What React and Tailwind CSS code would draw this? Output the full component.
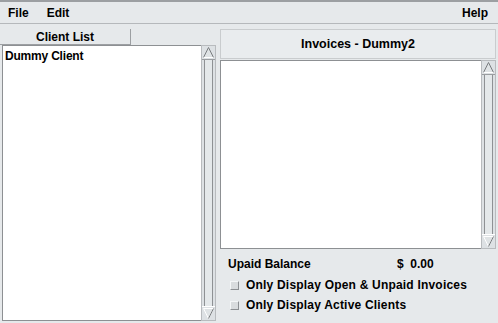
import React from "react";

function UpArrow() {
  return (
    <svg width="13" height="13" viewBox="0 0 13 13" className="block">
      <path d="M6.5 1.5 L11.5 11.5 L1.5 11.5 Z" fill="#dfe3e5" stroke="#7a7d80" strokeWidth="1" />
      <path d="M1.5 11.5 L11.5 11.5" stroke="#ffffff" strokeWidth="1" />
    </svg>
  );
}
function DownArrow() {
  return (
    <svg width="13" height="13" viewBox="0 0 13 13" className="block">
      <path d="M1.5 1.5 L11.5 1.5 L6.5 11.5 Z" fill="#dfe3e5" stroke="#ffffff" strokeWidth="1" />
      <path d="M11.5 1.5 L6.5 11.5" stroke="#7a7d80" strokeWidth="1" />
    </svg>
  );
}

function Scrollbar() {
  return (
    <div className="w-[15px] flex flex-col bg-[#dde1e4] border border-[#b8bbbe]">
      <div className="h-[14px] flex items-center justify-center border-b border-[#9a9da0]">
        <UpArrow />
      </div>
      <div className="flex-1 flex justify-center">
        <div className="w-[9px] border-x border-[#8e9194] bg-[#e4e8ea]" />
      </div>
      <div className="h-[14px] flex items-center justify-center border-t border-[#ffffff]">
        <DownArrow />
      </div>
    </div>
  );
}

function Check({ label }) {
  return (
    <div className="flex items-center gap-[7px] h-[20px]">
      <div className="w-[9px] h-[9px] bg-[#d9dcde] border-l border-t border-[#f4f6f7] border-r border-b border-r-[#8d9093] border-b-[#8d9093]" />
      <span className="tracking-[0.2px]">{label}</span>
    </div>
  );
}

export default function App() {
  return (
    <div
      className="w-[498px] h-[323px] bg-[#e6e9eb] text-black font-bold text-[12px] flex flex-col overflow-hidden"
      style={{ fontFamily: '"Liberation Sans", Arial, sans-serif' }}
    >
      <div className="h-[2px] bg-[#9c9fa2]" />
      <div className="h-[22px] flex items-center px-[8px] border-b border-[#b5b8bb]">
        <span>File</span>
        <span className="ml-[18px]">Edit</span>
        <span className="ml-auto mr-[2px]">Help</span>
      </div>
      <div className="flex-1 flex pt-[4px] pb-[2px]">
        <div className="w-[216px] flex flex-col">
          <div className="flex h-[17px] pt-[1px]">
            <div className="w-[131px] border-r border-b border-[#9c9fa2] flex items-center justify-center">
              Client List
            </div>
          </div>
          <div className="flex-1 flex pl-[2px]">
            <div className="flex-1 bg-white border border-[#8d9093] border-r-0 px-[2px] pt-[1px] leading-[18px] tracking-[-0.2px]">
              Dummy Client
            </div>
            <Scrollbar />
          </div>
        </div>
        <div className="flex-1 flex flex-col pl-[4px] pr-[2px]">
          <div className="h-[30px] mt-[1px] flex items-center justify-center border border-[#c9ccce] bg-[#e9ecee] text-[12.5px]">
            Invoices - Dummy2
          </div>
          <div className="h-[189px] flex mt-[1px]">
            <div className="flex-1 bg-white border border-[#8d9093] border-r-0" />
            <Scrollbar />
          </div>
          <div className="flex items-center h-[26px] pl-[8px] mt-[2px]">
            <span className="w-[169px]">Upaid Balance</span>
            <span>$ &nbsp;0.00</span>
          </div>
          <div className="pl-[10px] -mt-[2px]">
            <Check label="Only Display Open & Unpaid Invoices" />
            <Check label="Only Display Active Clients" />
          </div>
        </div>
      </div>
    </div>
  );
}
